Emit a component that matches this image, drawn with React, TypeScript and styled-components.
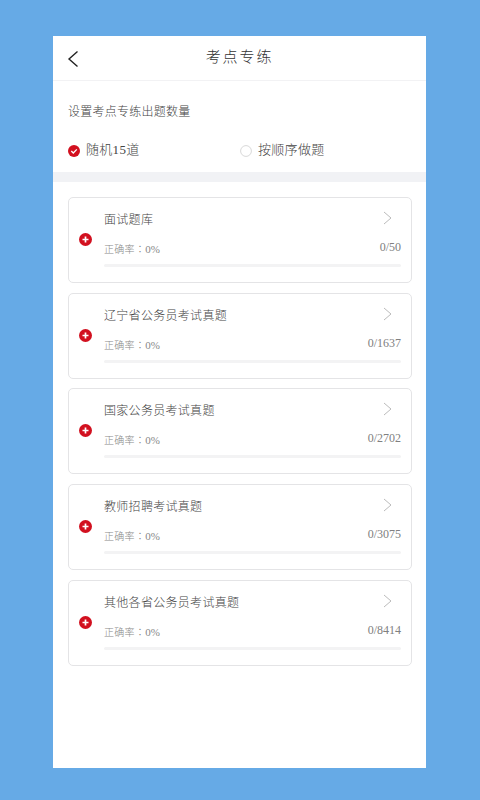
import React from 'react';
import styled, { createGlobalStyle } from 'styled-components';

const GlobalStyle = createGlobalStyle`
  html, body {
    margin: 0;
    padding: 0;
    background: #66aae6;
  }
  * {
    box-sizing: border-box;
  }
`;

const Page = styled.div`
  width: 480px;
  height: 800px;
  padding: 36px 54px 32px 53px;
  background: #66aae6;
  font-family: 'Liberation Serif', 'Noto Sans CJK SC', serif;
`;

const Panel = styled.div`
  height: 100%;
  background: #fff;
`;

const Header = styled.header`
  height: 45px;
  display: flex;
  align-items: center;
  justify-content: center;
  position: relative;
  border-bottom: 1px solid #f2f2f4;
`;

const BackButton = styled.svg`
  position: absolute;
  left: 14px;
  top: 14px;
  width: 12px;
  height: 18px;
`;

const Title = styled.h1`
  margin: 0 0 6px;
  font-size: 15px;
  font-weight: 300;
  letter-spacing: 1.9px;
  color: #333;
`;

const Settings = styled.section`
  height: 101px;
  padding: 22px 15px 0;
  border-bottom: 10px solid #f1f2f5;
`;

const SettingsLabel = styled.div`
  font-size: 12px;
  line-height: 18px;
  font-weight: 300;
  letter-spacing: 0.25px;
  color: #444;
`;

const Options = styled.div`
  display: grid;
  grid-template-columns: 172px 1fr;
  margin-top: 19px;
`;

const Option = styled.div`
  display: flex;
  align-items: center;
  gap: 6px;
  font-size: 13px;
  line-height: 20px;
  font-weight: 300;
  letter-spacing: 0.3px;
  color: #444;
`;

const Radio = styled.svg`
  width: 12px;
  height: 12px;
  flex: none;
  margin-top: 2px;
`;

const List = styled.div`
  display: flex;
  flex-direction: column;
  gap: 9.75px;
  padding: 14.75px 14px 0 15px;
`;

const Card = styled.div`
  height: 86px;
  position: relative;
  display: flex;
  flex-direction: column;
  padding: 13px 10px 0 35px;
  border: 1px solid #e4e4e6;
  border-radius: 5px;
`;

const AddBadge = styled.svg`
  position: absolute;
  left: 10px;
  top: 35px;
  width: 13px;
  height: 13px;
`;

const TitleRow = styled.div`
  display: flex;
  align-items: center;
  justify-content: space-between;
`;

const CardTitle = styled.div`
  font-size: 12px;
  line-height: 18px;
  font-weight: 300;
  letter-spacing: 0.3px;
  color: #444;
`;

const Chevron = styled.svg`
  width: 9px;
  height: 14px;
  margin-right: 9px;
  margin-top: -4px;
`;

const StatRow = styled.div`
  display: flex;
  align-items: flex-end;
  justify-content: space-between;
  margin-top: 5px;
  height: 23px;
`;

const Accuracy = styled.div`
  font-family: 'Liberation Serif', 'Noto Sans CJK TC', serif;
  font-size: 10px;
  line-height: 14px;
  font-weight: 300;
  letter-spacing: 0.3px;
  color: #888;

  b {
    font-size: 11px;
    font-weight: 400;
    letter-spacing: 0;
  }
`;

const Count = styled.div`
  font-size: 12px;
  line-height: 14px;
  margin-bottom: 3px;
  color: #808080;
`;

const Track = styled.div`
  height: 3px;
  margin-top: 7px;
  border-radius: 2px;
  background: #f3f3f4;
`;

const banks = [
  { name: '面试题库', total: 50 },
  { name: '辽宁省公务员考试真题', total: 1637 },
  { name: '国家公务员考试真题', total: 2702 },
  { name: '教师招聘考试真题', total: 3075 },
  { name: '其他各省公务员考试真题', total: 8414 },
];

export default function App() {
  return (
    <Page>
      <GlobalStyle />
      <Panel>
        <Header>
          <BackButton viewBox="0 0 12 18" fill="none" stroke="#222" strokeWidth="1.4">
            <path d="M10.5 1.5 L2 9 L10.5 16.5" />
          </BackButton>
          <Title>考点专练</Title>
        </Header>
        <Settings>
          <SettingsLabel>设置考点专练出题数量</SettingsLabel>
          <Options>
            <Option>
              <Radio viewBox="0 0 12 12">
                <circle cx="6" cy="6" r="6" fill="#d2101f" />
                <path d="M3.3 6 L5.3 8 L8.8 4.4" fill="none" stroke="#fff" strokeWidth="1.3" />
              </Radio>
              随机15道
            </Option>
            <Option>
              <Radio viewBox="0 0 12 12">
                <circle cx="6" cy="6" r="5.4" fill="#fff" stroke="#d8d8d8" strokeWidth="1" />
              </Radio>
              按顺序做题
            </Option>
          </Options>
        </Settings>
        <List>
          {banks.map(bank => (
            <Card key={bank.name}>
              <AddBadge viewBox="0 0 13 13">
                <circle cx="6.5" cy="6.5" r="6.5" fill="#d2101f" />
                <path d="M3.5 6.5 H9.5 M6.5 3.5 V9.5" stroke="#fff" strokeWidth="1.7" />
              </AddBadge>
              <TitleRow>
                <CardTitle>{bank.name}</CardTitle>
                <Chevron viewBox="0 0 9 14" fill="none" stroke="#bbb" strokeWidth="1">
                  <path d="M1 1 L8 7 L1 13" />
                </Chevron>
              </TitleRow>
              <StatRow>
                <Accuracy>正确率：<b>0%</b></Accuracy>
                <Count>0/{bank.total}</Count>
              </StatRow>
              <Track />
            </Card>
          ))}
        </List>
      </Panel>
    </Page>
  );
}
